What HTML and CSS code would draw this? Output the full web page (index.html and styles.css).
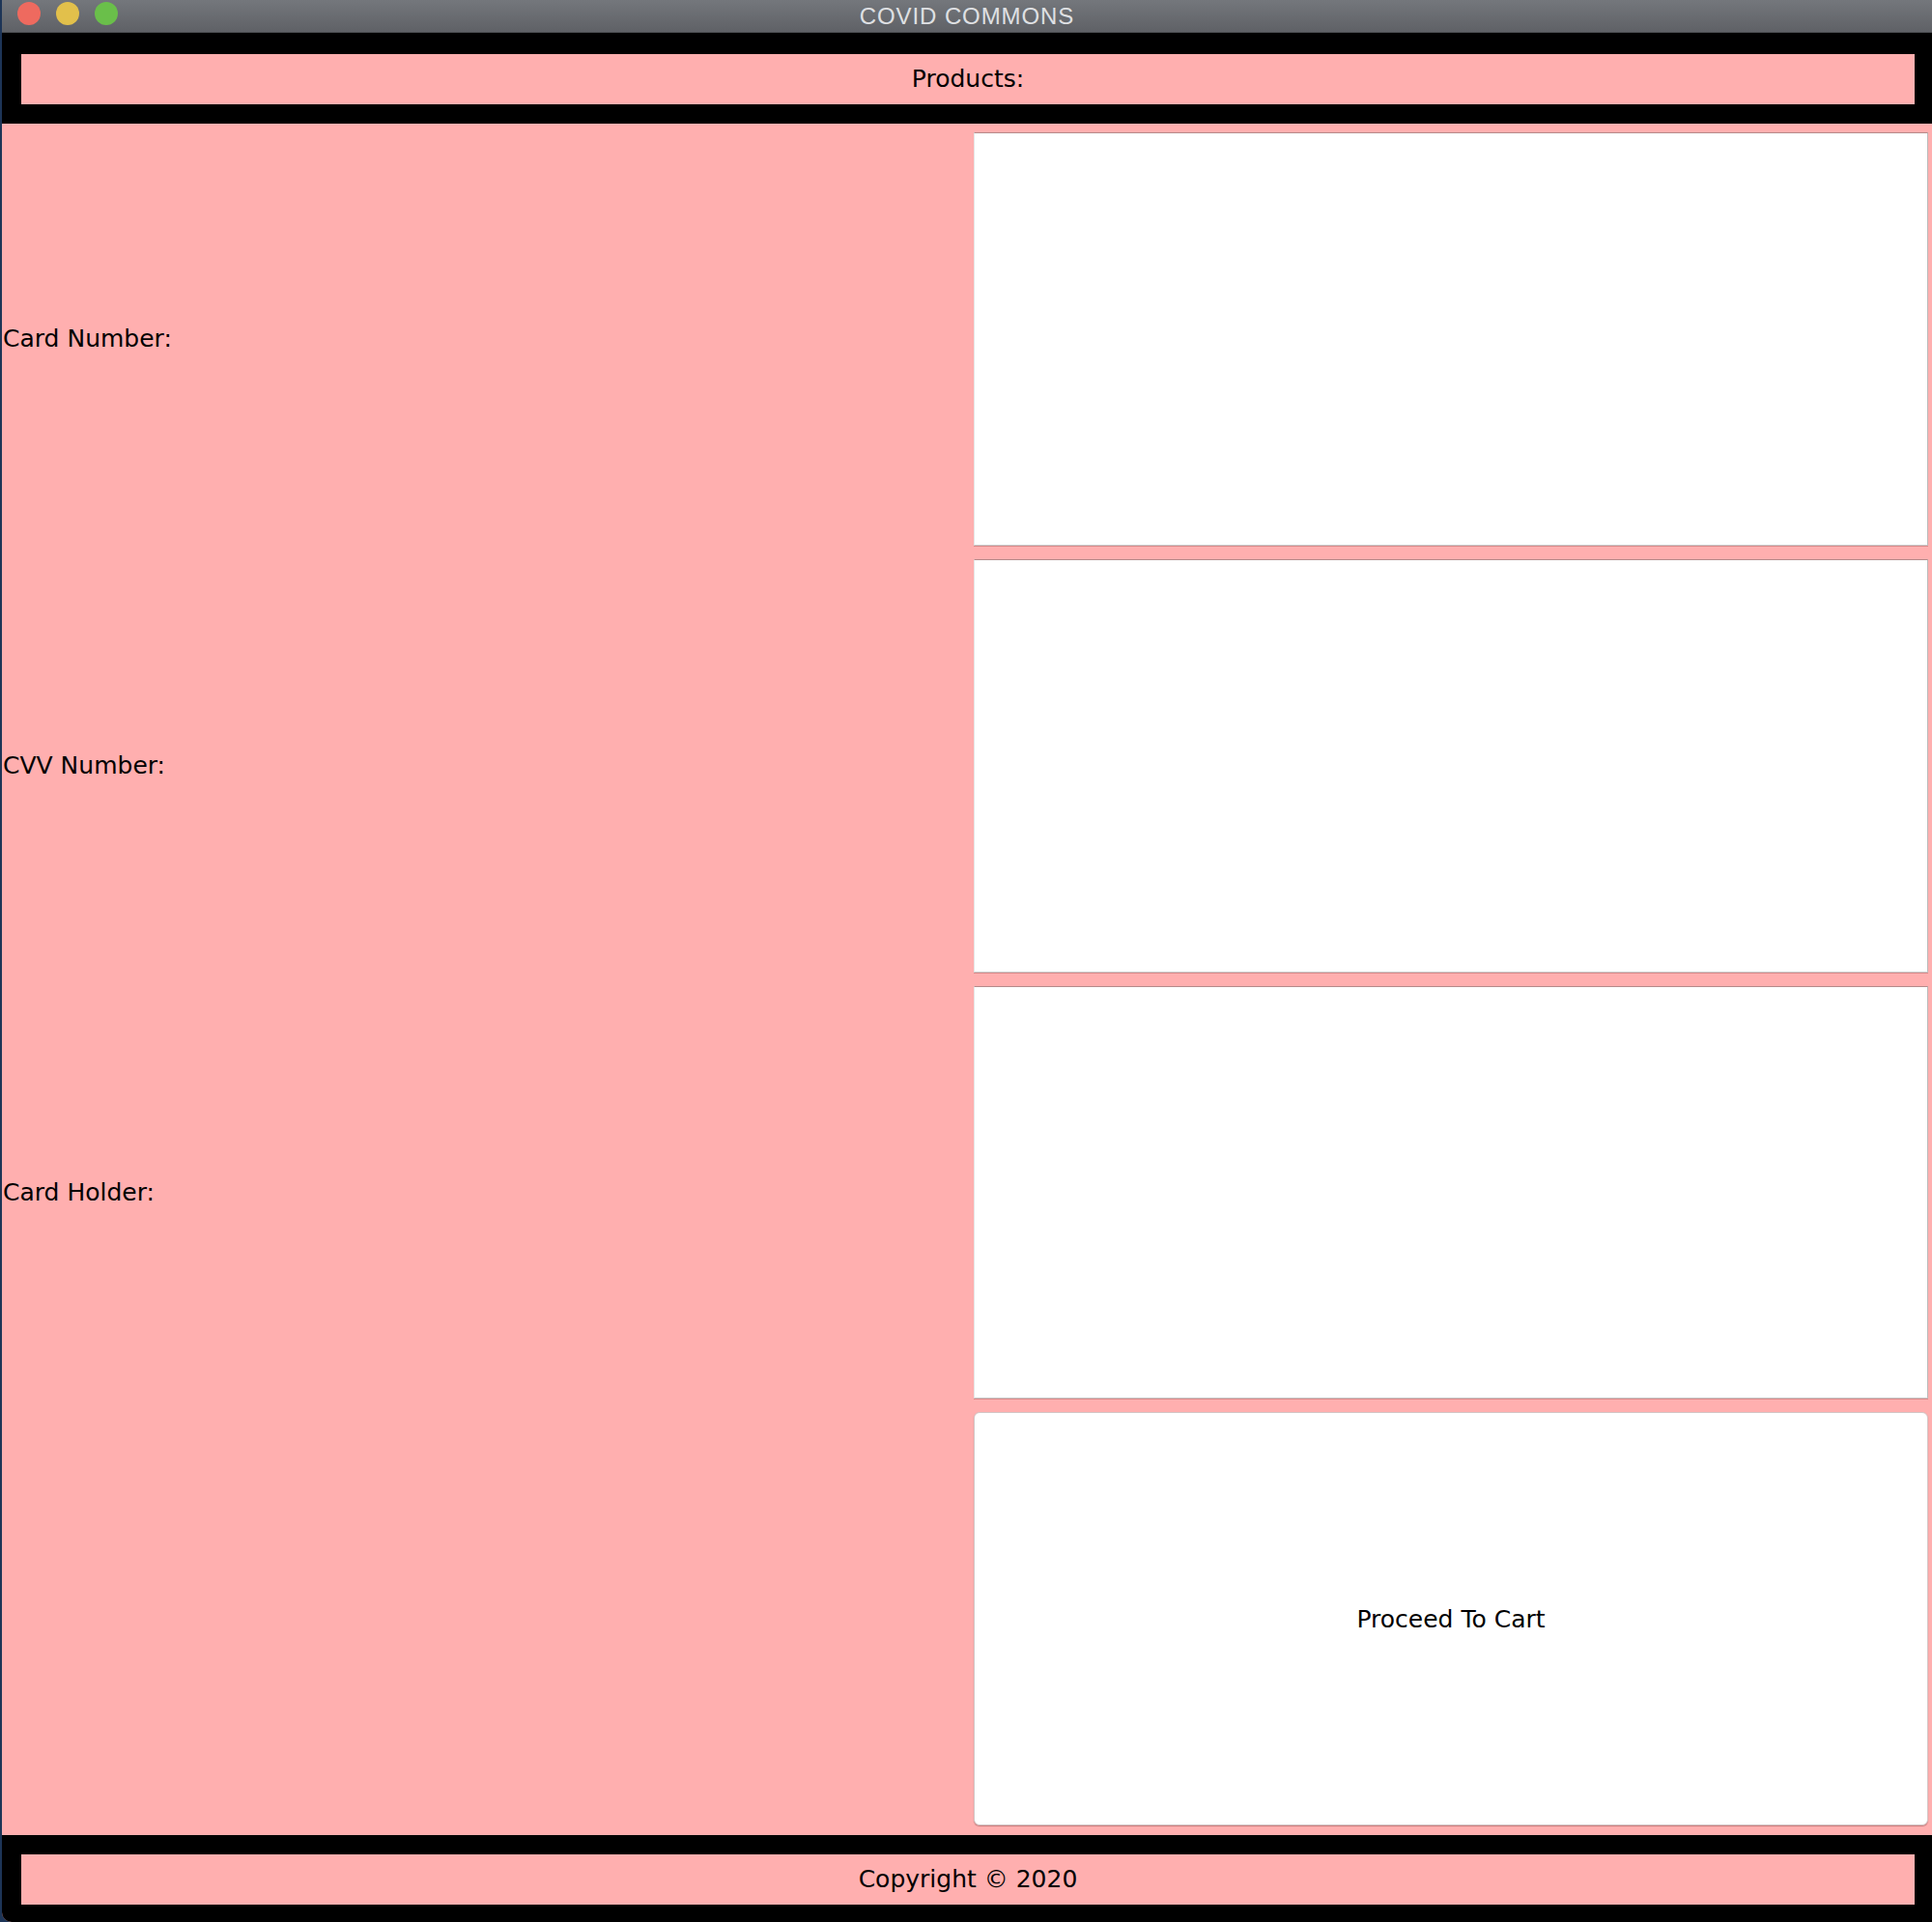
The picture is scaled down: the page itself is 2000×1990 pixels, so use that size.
FILE: index.html
```html
<html>
<head>
<meta charset="UTF-8">
<title>COVID COMMONS</title>
<link rel="stylesheet" href="styles.css">
</head>
<body>
<div class="window">

  <div class="titleBar">
    <div class="lights">
      <span class="light red"></span>
      <span class="light yellow"></span>
      <span class="light green"></span>
    </div>
    <div class="titleText">COVID COMMONS</div>
  </div>

  <div class="banner">
    <div class="bannerInner">Products:</div>
  </div>

  <div class="paymentForm">
    <label class="fieldLabel row1" for="cardNumber">Card Number:</label>
    <input class="textField row1" id="cardNumber" type="text">

    <label class="fieldLabel row2" for="cvvNumber">CVV Number:</label>
    <input class="textField row2" id="cvvNumber" type="text">

    <label class="fieldLabel row3" for="cardHolder">Card Holder:</label>
    <input class="textField row3" id="cardHolder" type="text">

    <div class="fieldLabel row4"></div>
    <button class="cartButton row4" type="button">Proceed To Cart</button>
  </div>

  <div class="banner footer">
    <div class="bannerInner">Copyright &copy; 2020</div>
  </div>

</div>
</body>
</html>
```

FILE: styles.css
```css
:root { --pink: #ffafaf; --chrome: #000000; }

html, body { margin: 0; padding: 0; }
body { width: 2000px; height: 1990px; overflow: hidden; background: #1d3557;
       font-family: "DejaVu Sans", "Noto Sans", sans-serif; font-size: 25px; color: #000; }

.window { margin-left: 2px; width: 1998px; height: 1990px; display: flex; flex-direction: column;
          background: var(--pink); border-bottom-left-radius: 10px; overflow: hidden; }

/* title bar */
.titleBar { height: 33px; flex: none; position: relative; display: flex; align-items: center; justify-content: center;
            background: linear-gradient(#74777c, #5f6166); border-bottom: 1px solid #4c4e52; }
.lights { position: absolute; left: 16px; top: 2px; display: flex; gap: 16px; }
.light { width: 24px; height: 24px; border-radius: 50%; display: block; }
.light.red    { background: #ee6a5f; }
.light.yellow { background: #e2c04b; }
.light.green  { background: #6abf4a; }
.titleText { font-family: "Liberation Sans", Arial, sans-serif; font-size: 24px; letter-spacing: 0.9px;
             color: #dfe0e3; line-height: 33px; }

/* header / footer bands */
.banner { flex: none; background: var(--chrome); padding: 22px 18px 20px 20px; }
.banner.footer { padding: 20px 18px 18px 20px; }
.bannerInner { height: 52px; line-height: 52px; background: var(--pink); text-align: center; }

/* form grid */
.paymentForm { flex: 1; display: grid; grid-template-columns: 1006px 988px; grid-template-rows: repeat(4, 1fr);
               grid-auto-flow: column; column-gap: 0; row-gap: 14px; padding: 9px 4px 10px 0; }
.fieldLabel { grid-column: 1; display: flex; align-items: center; padding-left: 1px; }
.textField, .cartButton { grid-column: 2; }
.row1 { grid-row: 1; } .row2 { grid-row: 2; } .row3 { grid-row: 3; } .row4 { grid-row: 4; }

.textField { margin: 0; padding: 0 6px; background: #fff; font: inherit;
             border: 1px solid; border-color: #b58a8a #b9b9b9 #c9c9c9 #e6e6e6;
             box-shadow: 0 1px 0 rgba(140, 70, 70, 0.35); outline: none; }

.cartButton { margin: 0; background: #fff; font: inherit; color: #000; cursor: pointer;
              border: 1px solid #d4c6c6; border-radius: 6px;
              box-shadow: 0 1px 1px rgba(140, 70, 70, 0.5); }
```
